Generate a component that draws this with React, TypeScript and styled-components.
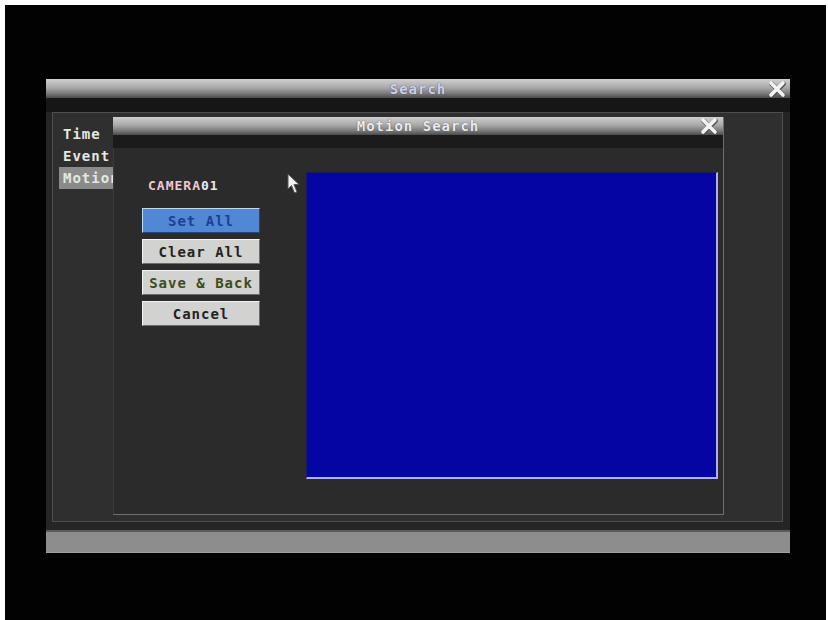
import React, { useState } from "react";
import styled, { createGlobalStyle } from "styled-components";

const GlobalStyle = createGlobalStyle`
  html, body {
    margin: 0;
    padding: 0;
    background: #ffffff;
  }
  body {
    font-family: "DejaVu Sans Mono", "Liberation Mono", monospace;
  }
`;

const Screen = styled.div`
  margin: 5px 2px 0 5px;
  height: 615px;
  background: #020202;
  padding: 74px 0 0 41px;
  box-sizing: border-box;
`;

const Window = styled.div`
  position: relative;
  width: 744px;
  height: 474px;
  display: flex;
  flex-direction: column;
  background: #2a2a2a;
`;

const TitleBar = styled.div<{ $height: number; $color: string }>`
  position: relative;
  height: ${(p) => p.$height}px;
  flex: none;
  display: flex;
  align-items: center;
  justify-content: center;
  background: linear-gradient(#cfcfcf 0%, #a9a9a9 45%, #7c7c7c 75%, #4a4a4a 100%);
  color: ${(p) => p.$color};
  font-size: 14px;
  font-weight: bold;
  letter-spacing: 1px;
  text-shadow: 0 0 1px #333;
`;

const CloseButton = styled.div<{ $right: number }>`
  position: absolute;
  right: ${(p) => p.$right}px;
  top: 50%;
  transform: translateY(-50%);
  width: 18px;
  height: 18px;
  display: flex;
  cursor: pointer;
`;

const Band = styled.div<{ $height: number; $bg: string }>`
  height: ${(p) => p.$height}px;
  flex: none;
  background: ${(p) => p.$bg};
`;

const WindowBody = styled.div`
  flex: 1;
  display: flex;
  padding: 0 7px 8px 6px;
  background: #252525;
`;

const Panel = styled.div`
  flex: 1;
  border: 1px solid #4e4e4e;
  background: #2f2f2f;
  padding: 10px 0 0 6px;
`;

const MenuItem = styled.div<{ $active?: boolean }>`
  width: 60px;
  height: 22px;
  line-height: 22px;
  padding-left: 4px;
  box-sizing: border-box;
  font-size: 14px;
  font-weight: bold;
  letter-spacing: 1px;
  color: #e4e8e0;
  background: ${(p) => (p.$active ? "#8b8b8b" : "transparent")};
  overflow: hidden;
  white-space: nowrap;
`;

const StatusBar = styled.div`
  height: 23px;
  flex: none;
  background: #8d8d8d;
  border-top: 2px solid #5a5a5a;
  border-bottom: 1px solid #a0a0a0;
  box-sizing: border-box;
`;

const Dialog = styled.div`
  position: absolute;
  left: 67px;
  top: 38px;
  width: 611px;
  height: 398px;
  display: flex;
  flex-direction: column;
  background: #2b2b2b;
  border-right: 1px solid #6e6e6e;
  border-bottom: 1px solid #6e6e6e;
  box-sizing: border-box;
`;

const DialogBody = styled.div`
  position: relative;
  flex: 1;
  display: flex;
  align-items: flex-start;
  padding: 24px 5px 0 28px;
  border-left: 1px solid #3a3a3a;
`;

const Controls = styled.div`
  width: 118px;
  display: flex;
  flex-direction: column;
  gap: 6px;
  padding-top: 6px;
`;

const CameraLabel = styled.div`
  height: 18px;
  margin: 0 0 6px 6px;
  font-size: 13px;
  font-weight: bold;
  letter-spacing: 1px;
  color: #f0e6ee;
`;

const Red = styled.span`
  color: #f4c8d0;
`;

const Button = styled.button<{ $active?: boolean; $tint?: string }>`
  width: 118px;
  height: 25px;
  padding: 0;
  font-family: "DejaVu Sans Mono", "Liberation Mono", monospace;
  font-size: 14px;
  font-weight: bold;
  letter-spacing: 1px;
  cursor: pointer;
  color: ${(p) => (p.$active ? "#1d3f96" : p.$tint || "#222222")};
  background: ${(p) => (p.$active ? "#5088d6" : "#d2d2d0")};
  border: 1px solid;
  border-color: ${(p) =>
    p.$active ? "#c0d8f0 #27457a #27457a #c0d8f0" : "#f4f4f4 #6c6c6c #6c6c6c #f4f4f4"};
`;

const Canvas = styled.div`
  margin-left: auto;
  width: 412px;
  height: 307px;
  background: #0505a3;
  border-top: 1px solid #1c1c5c;
  border-left: 1px solid #1c1c5c;
  border-right: 2px solid #b0b0f4;
  border-bottom: 2px solid #b0b0f4;
  box-sizing: border-box;
`;

const Pointer = styled.svg`
  position: absolute;
  left: 173px;
  top: 25px;
`;

const CloseIcon: React.FC = () => (
  <svg width="18" height="18" viewBox="0 0 18 18">
    <path d="M3 3 L15 15 M15 3 L3 15" stroke="#555" strokeWidth="4.5" strokeLinecap="round" transform="translate(0.6 0.8)" />
    <path d="M3 3 L15 15 M15 3 L3 15" stroke="#f4f4f4" strokeWidth="3.6" strokeLinecap="round" />
  </svg>
);

const App: React.FC = () => {
  const [mode, setMode] = useState("set");

  return (
    <>
      <GlobalStyle />
      <Screen>
        <Window>
          <TitleBar $height={19} $color="#cfd0f4">
            Search
            <CloseButton $right={4}>
              <CloseIcon />
            </CloseButton>
          </TitleBar>
          <Band $height={14} $bg="#161616" />
          <WindowBody>
            <Panel>
              <MenuItem>Time</MenuItem>
              <MenuItem>Event</MenuItem>
              <MenuItem $active>Motion</MenuItem>
            </Panel>
          </WindowBody>
          <StatusBar />

          <Dialog>
            <TitleBar $height={18} $color="#ececec">
              Motion Search
              <CloseButton $right={5}>
                <CloseIcon />
              </CloseButton>
            </TitleBar>
            <Band $height={13} $bg="#1b1b1b" />
            <DialogBody>
              <Controls>
                <CameraLabel>
                  <Red>CAMERA</Red>01
                </CameraLabel>
                <Button $active={mode === "set"} onClick={() => setMode("set")}>
                  Set All
                </Button>
                <Button $active={mode === "clear"} onClick={() => setMode("clear")}>
                  Clear All
                </Button>
                <Button $tint="#3e4c1c">Save &amp; Back</Button>
                <Button>Cancel</Button>
              </Controls>
              <Pointer width="14" height="22" viewBox="0 0 14 22">
                <path
                  d="M1 1 L1 16 L4.5 12.5 L7.5 20 L10 19 L7 11.5 L12 11.5 Z"
                  fill="#f2f2f2"
                  stroke="#555"
                  strokeWidth="1"
                />
              </Pointer>
              <Canvas />
            </DialogBody>
          </Dialog>
        </Window>
      </Screen>
    </>
  );
};

export default App;
